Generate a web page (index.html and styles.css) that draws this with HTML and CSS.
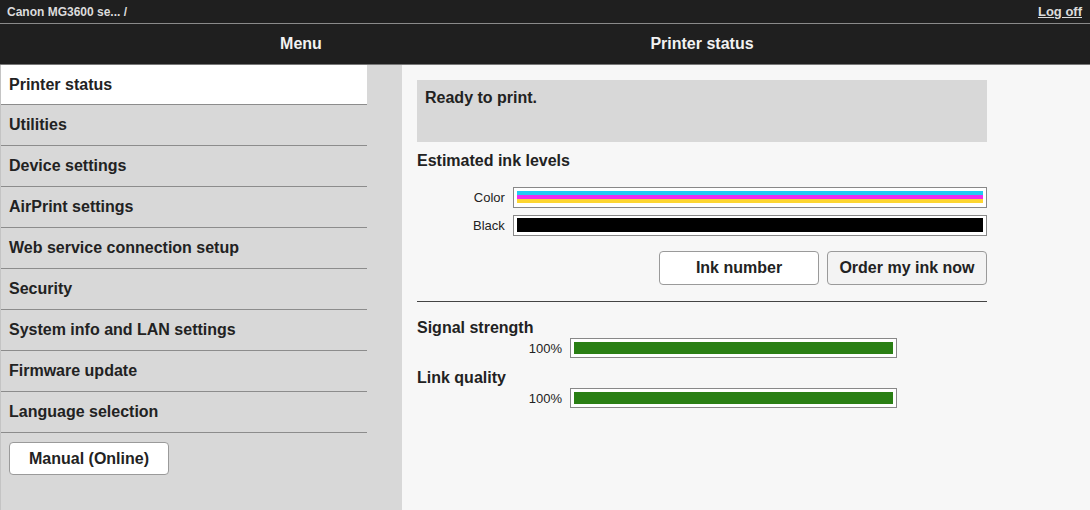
FILE: index.html
```html
<!DOCTYPE html>
<html lang="en">
<head>
<meta charset="utf-8">
<title>Printer status</title>
<link rel="stylesheet" href="styles.css">
</head>
<body>
<div class="topbar">
  <span class="model">Canon MG3600 se... /</span>
  <a class="logoff" href="#">Log off</a>
</div>
<div class="header">
  <div class="h-menu">Menu</div>
  <div class="h-title">Printer status</div>
</div>
<div class="layout">
  <aside class="sidebar">
    <ul class="nav">
      <li class="nav-item first active">Printer status</li>
      <li class="nav-item">Utilities</li>
      <li class="nav-item">Device settings</li>
      <li class="nav-item">AirPrint settings</li>
      <li class="nav-item">Web service connection setup</li>
      <li class="nav-item">Security</li>
      <li class="nav-item">System info and LAN settings</li>
      <li class="nav-item">Firmware update</li>
      <li class="nav-item">Language selection</li>
    </ul>
    <button class="btn manual">Manual (Online)</button>
  </aside>
  <main class="main">
    <div class="status">Ready to print.</div>
    <h3 class="section-title ink-title">Estimated ink levels</h3>
    <div class="ink-row">
      <span class="ink-label">Color</span>
      <div class="ink-box color-box">
        <div class="stripe cyan"></div>
        <div class="stripe magenta"></div>
        <div class="stripe yellow"></div>
      </div>
    </div>
    <div class="ink-row">
      <span class="ink-label">Black</span>
      <div class="ink-box black-box">
        <div class="black-fill"></div>
      </div>
    </div>
    <div class="actions">
      <button class="btn ink-number">Ink number</button>
      <button class="btn order">Order my ink now</button>
    </div>
    <hr class="divider">
    <h3 class="section-title sig-title">Signal strength</h3>
    <div class="meter-row">
      <span class="meter-label">100%</span>
      <div class="meter"><div class="meter-fill" style="width:100%"></div></div>
    </div>
    <h3 class="section-title link-title">Link quality</h3>
    <div class="meter-row">
      <span class="meter-label">100%</span>
      <div class="meter"><div class="meter-fill" style="width:100%"></div></div>
    </div>
  </main>
</div>
</body>
</html>
```
FILE: styles.css
```css
* { box-sizing: border-box; }
html, body { margin: 0; padding: 0; }
body {
  font-family: "Liberation Sans", Arial, sans-serif;
  background: #f7f7f7;
  color: #222;
  width: 1090px;
  height: 510px;
  overflow: hidden;
}
.topbar {
  height: 24px;
  background: #1f1f1f;
  border-bottom: 1px solid #8a8a8a;
  display: flex;
  justify-content: space-between;
  align-items: center;
  padding: 0 8px 0 7px;
}
.model {
  font-size: 12px;
  font-weight: bold;
  color: #dcdcdc;
}
.logoff {
  font-size: 13px;
  font-weight: bold;
  color: #dcdcdc;
  text-decoration: underline;
}
.header {
  height: 41px;
  background: #1f1f1f;
  border-bottom: 1px solid #777;
  display: flex;
  align-items: center;
  font-size: 16px;
  font-weight: bold;
  color: #f2f2f2;
}
.h-menu {
  width: 402px;
  padding-left: 200px;
  text-align: center;
}
.h-title {
  width: 600px;
  text-align: center;
}
.layout {
  display: flex;
  height: 445px;
}
.sidebar {
  width: 402px;
  flex: none;
  background: #d8d8d8;
  border-left: 1px solid #c4c4c4;
}
.nav {
  list-style: none;
  margin: 0;
  padding: 0;
  width: 366px;
}
.nav-item {
  height: 41px;
  border-bottom: 1px solid #8c8c8c;
  display: flex;
  align-items: center;
  padding-left: 8px;
  font-size: 16px;
  font-weight: bold;
  color: #222;
}
.nav-item.first { height: 40px; }
.nav-item.active { background: #fff; }
.btn {
  font-family: "Liberation Sans", Arial, sans-serif;
  font-size: 16px;
  font-weight: bold;
  color: #222;
  background: #fff;
  border: 1px solid #9a9a9a;
  border-radius: 4px;
  height: 34px;
  padding: 0;
  cursor: pointer;
}
.manual {
  display: block;
  margin: 9px 0 0 8px;
  width: 160px;
  height: 33px;
}
.main {
  width: 600px;
  padding: 15px 15px 0;
}
.status {
  height: 62px;
  background: #d8d8d8;
  padding: 9px 8px;
  font-size: 16px;
  font-weight: bold;
  line-height: 18px;
}
.section-title {
  margin: 0;
  font-size: 16px;
  font-weight: bold;
  line-height: 18px;
}
.ink-title { margin-top: 10px; margin-bottom: 17px; }
.ink-row {
  display: flex;
  align-items: center;
  gap: 8px;
  margin-bottom: 7px;
}
.ink-label {
  width: 88px;
  text-align: right;
  font-size: 13px;
}
.ink-box {
  width: 475px;
  height: 21px;
  border: 1px solid #888;
  background: #fff;
}
.color-box { padding: 3px 3px 4px; }
.stripe { height: 4px; }
.cyan { background: #22ccf2; }
.magenta { background: #ef2cee; }
.yellow { background: #fdd530; }
.black-box { padding: 2px 3px 3px; }
.black-fill { height: 14px; background: #000; }
.actions {
  display: flex;
  justify-content: flex-end;
  gap: 8px;
  margin-top: 15px;
}
.ink-number { width: 160px; background: #fff; }
.order { width: 160px; background: #f3f3f3; }
.divider {
  margin: 16px 0 0;
  border: 0;
  border-top: 1px solid #444;
  height: 0;
}
.sig-title { margin-top: 17px; }
.link-title { margin-top: 11px; }
.meter-row {
  display: flex;
  align-items: center;
  gap: 8px;
  margin-top: 1px;
}
.meter-label {
  width: 145px;
  text-align: right;
  font-size: 13px;
}
.meter {
  width: 327px;
  height: 20px;
  border: 1px solid #888;
  background: #fff;
  padding: 3px;
}
.meter-fill {
  height: 12px;
  background: #2a7f14;
}
```
